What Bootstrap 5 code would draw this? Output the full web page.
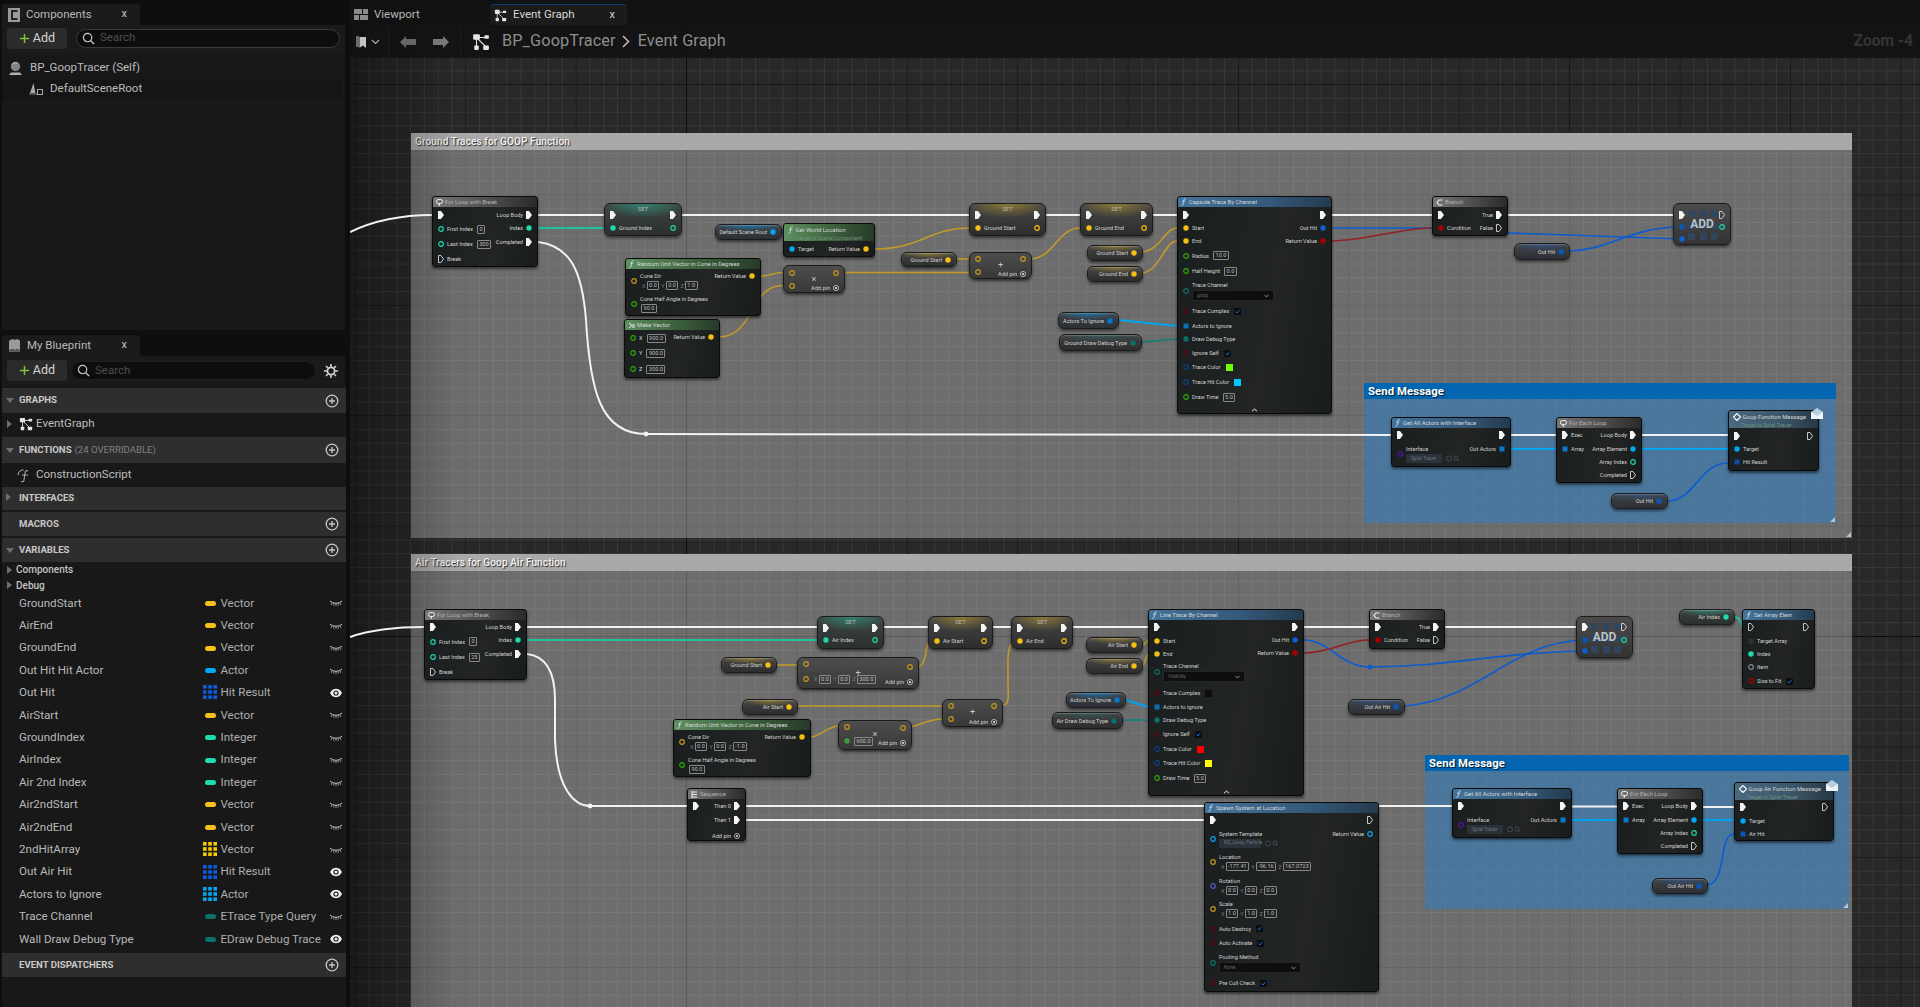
<!doctype html>
<html lang="en"><head><meta charset="utf-8"><title>BP_GoopTracer</title>
<link href="https://cdn.jsdelivr.net/npm/bootstrap@5.3.0/dist/css/bootstrap.min.css" rel="stylesheet">
<style>
html,body{height:100%;margin:0;overflow:hidden;background:#0e0e0e;font-family:Roboto,"Liberation Sans",sans-serif;color:#c0c0c0}
.ue-app{width:1920px;height:1007px}
.ue-side{width:350px;flex:none}
.ue-panel-a{height:330px}
.ue-panel-b{height:672px;margin-top:5px}
.ue-tabrow{height:25px;padding:4px 0 0 2px}
.ue-panel-b .ue-tabrow{height:21px;padding-top:0}
.ue-tab{width:138px;height:21px;background:#1b1b1b;border-radius:4px 4px 0 0;padding:0 6px 0 6px;font-size:11.5px;color:#b8b8b8;display:flex;align-items:center;gap:6px}
.ue-tab .ue-x{margin-left:auto;margin-right:7px;font-size:11px;color:#c8c8c8}
.ue-toolbar{height:28px;margin-left:2px;margin-right:5px;background:#1a1a1a;display:flex;align-items:center;padding:0 5px 2px;gap:9px}
.ue-panel-b .ue-toolbar{height:29px;gap:4px;padding-bottom:0}
.ue-add{width:60px;height:21px;background:#2b2b2b;border-radius:3px;font-size:12.5px;color:#d4d4d4;display:flex;align-items:center;justify-content:center;gap:3px;padding:0}
.ue-search{flex:1;height:19px;background:#0d0d0d;border:1px solid #3a3a3a;border-radius:10px;display:flex;align-items:center;padding:0 5px;gap:5px;font-size:11.5px;color:#4d4d4d}
.ue-panel-b .ue-search{border-color:#1f1f1f}
.ue-gear{margin:0 2px 0 4px;flex:none}
.ue-tree{height:277px;margin-left:2px;margin-right:5px;background:#181818;padding-top:5px}
.ue-treerow{height:20px;display:flex;align-items:center;font-size:11.5px;color:#bdbdbd;gap:3px;padding-left:6px}
.ue-treerow.ue-sub{background:#151515;padding-left:27px;margin-top:1px;margin-right:3px}
.ue-list{margin-left:2px;margin-right:4px;height:622px;background:#181818;padding-top:3px}
.ue-sec{background:#2e2e2e;display:flex;align-items:center;font-size:9.6px;font-weight:700;color:#c8c8c8;padding-left:4px}
.ue-s25{height:25px}
.ue-s26{height:26px}
.ue-s23{height:23px;margin-bottom:2px}
.ue-s24{height:24px;margin-bottom:2px}
.ue-s24b{height:24px}
.ue-sec .ue-caret{width:9px;flex:none}
.ue-sec .ue-dim{font-weight:400;color:#808080;margin-left:3px}
.ue-sec svg.ue-plus{margin-left:auto;margin-right:7px}
.ue-itemrow{height:20px;margin:1px 0 3px;display:flex;align-items:center;font-size:11.5px;color:#bdbdbd;padding-left:5px;gap:3px}
.ue-itemrow2{height:24px;margin:0;padding-left:15px;gap:4px}
.ue-folder{height:15.6px;display:flex;align-items:center;font-size:10px;font-weight:500;color:#c4c4c4;padding-left:5px;gap:4px}
.ue-vars{margin-top:-1px;margin-bottom:2.5px}
.ue-var{height:22.4px;display:flex;align-items:center;font-size:11.6px;color:#b8b8b8;padding-left:17px}
.ue-var .ue-vn{width:185px}
.ue-var .ue-vi{width:19px;display:flex;justify-content:center;flex:none}
.ue-var .ue-vt{width:110px;color:#adadad}
.ue-var .ue-ve{margin-left:auto;margin-right:3px;width:14px;display:flex}
.ue-pill{width:11px;height:5px;border-radius:3px;display:block}
.ue-tri{width:0;height:0;display:inline-block;border-style:solid;flex:none}
.ue-tri-r{border-width:4px 0 4px 5px;border-color:transparent transparent transparent #6e6e6e}
.ue-tri-d{border-width:5px 4px 0 4px;border-color:#6e6e6e transparent transparent transparent}
.ue-main{flex:1;position:relative;min-width:0}
.ue-mtabs{height:25px;background:#111;display:flex;align-items:flex-end;font-size:11.5px}
.ue-mtab{height:21px;display:flex;align-items:center;gap:6px;padding:0 4px}
.ue-mtab1{width:140px;color:#b5b5b5}
.ue-mtab2{width:137px;background:#1b1b1b;border-top:1px solid #0c3f70;border-radius:4px 4px 0 0;color:#d8d8d8;padding-left:4px}
.ue-mtab2 .ue-x{margin-left:auto;margin-right:8px;font-size:11px}
.ue-graph{position:relative;height:982px;overflow:hidden;background-color:#282828;
 background-image:linear-gradient(#0d0d0d,#0d0d0d),linear-gradient(#0d0d0d,#0d0d0d),
 linear-gradient(90deg,#161616 1px,transparent 1px),linear-gradient(#161616 1px,transparent 1px),
 linear-gradient(90deg,#383838 1px,transparent 1px),linear-gradient(#383838 1px,transparent 1px);
 background-size:1px 100%,100% 1px,110.4px 110.4px,110.4px 110.4px,13.8px 13.8px,13.8px 13.8px;
 background-position:336px 0,0 611px,336px 611px,336px 611px,336px 611px,336px 611px;
 background-repeat:no-repeat,no-repeat,repeat,repeat,repeat,repeat}
.ue-bar{position:absolute;left:0;top:0;right:0;height:33px;background:rgba(16,16,16,.86);display:flex;align-items:center;z-index:6;padding-left:6px}
.ue-sep{width:1px;height:33px;background:#1e1e1e}
.ue-back{margin-left:11px}
.ue-fwd{margin-left:17px}
.ue-sep2{margin-left:11px}
.ue-gicon{margin-left:11px}
.ue-crumb{font-size:16.3px;color:#8e8e8e;letter-spacing:.1px}
.ue-crumb1{margin-left:12px}
.ue-chevm{margin:0 8px 0 6px}
.ue-zoomtxt{margin-left:auto;margin-right:7px;font-size:15.6px;font-weight:700;color:#353535}
.ue-shade{position:absolute;left:0;top:0;bottom:0;width:110px;background:linear-gradient(90deg,rgba(0,0,0,.38),transparent);z-index:2;pointer-events:none}
.ue-cm{position:absolute;background:rgba(255,255,255,.32);z-index:1}
.ue-cm-h{height:17px;background:#a9a9a9;font-size:10.05px;font-weight:500;color:#f2f2f2;text-shadow:1px 1px 1px rgba(0,0,0,.75);padding-left:4px;line-height:18px;letter-spacing:.1px}
.ue-cm-s{background:rgba(54,124,185,.62);z-index:1}
.ue-cm-s .ue-cm-h{height:16px;background:#0465b0;font-size:11.3px;font-weight:700;color:#fff;line-height:18px}
.ue-grip{position:absolute;right:1px;bottom:1px;width:0;height:0;border-style:solid;border-width:0 0 5px 5px;border-color:transparent transparent #b9c4cc transparent}
.ue-wires{position:absolute;left:0;top:0;z-index:3}
.ue-n{position:absolute;z-index:4;box-sizing:border-box;border:1px solid #0a0a0a;background:linear-gradient(100deg,#1a1e1e,#232525 60%,#191c1c);border-radius:3px;box-shadow:0 2px 3px rgba(0,0,0,.55);font-size:5.6px;color:#d2d2d2;line-height:8px;white-space:nowrap}
.ue-nh{height:10px;display:flex;align-items:center;gap:2px;padding-left:3px;font-size:5.9px;color:#d8d8d8;border-radius:2px 2px 0 0;overflow:hidden}
.ue-h2{height:17px;display:block;padding:2px 0 0 4px}
.ue-h2 small{display:block;font-size:5.4px;color:#6f8f78;padding-left:8px;line-height:8px}
.ue-hgray{background:linear-gradient(90deg,#777,#555 45%,#2a2a2a);color:#b4b4b4}
.ue-hgreen{background:linear-gradient(90deg,#5f8f5f,#3e653f 50%,#273a2a)}
.ue-hblue{background:linear-gradient(90deg,#44739a,#34597a 60%,#243a4d)}
.ue-hmsg{background:linear-gradient(90deg,#4a6a80,#3a5568 60%,#263845)}
.ue-cols{display:flex;justify-content:space-between;padding:0 5px}
.ue-col{display:flex;flex-direction:column}
.ue-col-r{align-items:flex-end}
.ue-pr{display:flex;align-items:center;gap:3px}
.ue-col-r .ue-pr{flex-direction:row-reverse}
.ue-ic{width:6px;height:8px;flex:none;display:block}
.ue-st{display:flex;flex-direction:column;gap:1px;line-height:8px}
.ue-bx{display:inline-block;border:1px solid #888;height:9px;line-height:7px;padding:0 1.5px;color:#bdbdbd;font-size:5.6px;margin-left:1px;border-radius:1px}
.ue-xl{color:#777;margin-left:2px}
.ue-cb{display:inline-block;width:7px;height:7px;background:#0c0c0c;margin-left:2px;border-radius:1px;position:relative;vertical-align:middle}
.ue-sw{display:inline-block;width:7px;height:7px;margin-left:2px;vertical-align:middle}
.ue-dd{display:inline-flex;align-items:center;justify-content:space-between;height:11px;background:#0e0e0e;border:1px solid #262626;color:#666;font-size:4.8px;padding:0 4px;border-radius:1px}
.ue-dd2{background:#2b3238;border-color:#2b3238;color:#6a7680;height:9px}
.ue-sym{position:absolute;left:0;right:0;text-align:center;font-size:9px;color:#c9c9c9;line-height:9px;pointer-events:none}
.ue-chev{position:absolute;left:0;right:0;bottom:1px;text-align:center;color:#ddd;font-size:5px;line-height:5px}
.ue-env{position:absolute;right:-5px;top:-3px}
.ue-op,.ue-get,.ue-set{border-radius:6px;border-color:#1b1b1b;background:linear-gradient(#505050,#2e2e2e)}
.ue-get{display:flex;align-items:center;justify-content:flex-end;gap:3px;padding-right:5px;box-shadow:0 2px 3px rgba(0,0,0,.5),inset 0 1px 1px rgba(255,255,255,.2)}
.ue-op{background:linear-gradient(#4d4d4d,#383838)}
.ue-set{background:linear-gradient(#555,#2f2f2f)}
.ue-settl{height:10px;text-align:center;font-size:6px;line-height:10px;color:#b4b4b4}
.ue-gy{background:radial-gradient(ellipse 55% 45% at 50% 0,rgba(210,170,40,.5),transparent),linear-gradient(#464646,#2d2d2d)}
.ue-gt{background:radial-gradient(ellipse 55% 45% at 50% 0,rgba(40,200,160,.45),transparent),linear-gradient(#3d4644,#2b2f2e)}
.ue-gb{background:radial-gradient(ellipse 55% 45% at 50% 0,rgba(0,150,240,.55),transparent),linear-gradient(#414448,#2c3034)}
.ue-gB{background:radial-gradient(ellipse 55% 50% at 50% 0,rgba(30,100,200,.4),transparent),linear-gradient(#414448,#2c3034)}
.ue-gd{background:radial-gradient(ellipse 55% 45% at 50% 0,rgba(20,130,125,.35),transparent),linear-gradient(#424242,#2d2d2d)}
.ue-addn{background:linear-gradient(#4b4b4b,#343434);border-radius:6px;border-color:#1c1c1c}
.ue-addg{position:absolute;left:14px;top:6px;display:grid;grid-template-columns:repeat(3,7px);grid-auto-rows:7px;gap:4.5px}
.ue-addg i{background:#30465f;display:block}
.ue-addt{position:absolute;left:0;right:0;top:12px;text-align:center;font-size:12px;font-weight:700;color:#b9c2c9;line-height:16px}
</style></head>
<body>
<svg width="0" height="0" class="position-absolute">
<defs>
<symbol id="i-graph" viewBox="0 0 16 16"><path d="M4 4 12 4M4 4 12 12M4 4V12" stroke="#ddd" stroke-width="1"/><rect x="1" y="1" width="6" height="5" rx="1" fill="#e6e6e6"/><rect x="11" y="2" width="4" height="3" rx=".6" fill="#e6e6e6"/><rect x="2" y="11" width="4" height="4" rx=".8" fill="#e6e6e6"/><rect x="10" y="11" width="5" height="4" rx=".8" fill="#e6e6e6"/></symbol>
<symbol id="i-plus" viewBox="0 0 14 14"><circle cx="7" cy="7" r="5.8" fill="none" stroke="#c8c8c8" stroke-width="1.3"/><path d="M7 4V10M4 7H10" stroke="#c8c8c8" stroke-width="1.3"/></symbol>
<symbol id="i-eye" viewBox="0 0 14 10"><path d="M1 5C3 1.5 5 .8 7 .8S11 1.5 13 5C11 8.5 9 9.2 7 9.2S3 8.5 1 5Z" fill="#eee"/><circle cx="7" cy="5" r="2.6" fill="#181818"/><circle cx="7" cy="5" r="1.5" fill="#eee"/></symbol>
<symbol id="i-shut" viewBox="0 0 14 10"><path d="M1 3C4 6 10 6 13 3" fill="none" stroke="#cfcfcf" stroke-width="1"/><path d="M3 5 2 7M7 6V8M11 5 12 7M5 5.6 4.6 7.5M9 5.6 9.4 7.5" stroke="#cfcfcf" stroke-width=".7"/></symbol>
<symbol id="i-srch" viewBox="0 0 14 14"><circle cx="6" cy="6" r="4.5" fill="none" stroke="#c9c9c9" stroke-width="1.3"/><path d="M9.4 9.4 13 13" stroke="#c9c9c9" stroke-width="1.4"/></symbol>
<symbol id="i-addplus" viewBox="0 0 12 12"><path d="M6 1V11M1 6H11" stroke="#7fc23e" stroke-width="1.6"/></symbol>
</defs></svg>
<div class="ue-app d-flex">
 <aside class="ue-side">
  <section class="ue-panel-a">
   <div class="ue-tabrow"><div class="ue-tab"><svg width="12" height="14" viewBox="0 0 12 14"><path d="M0 0H12V14H0Z" fill="#9a9a9a"/><path d="M9.500 3H4V11H9.500" fill="none" stroke="#222" stroke-width="2"/></svg><span>Components</span><span class="ue-x">x</span></div></div>
   <div class="ue-toolbar"><div class="ue-add"><svg width="11" height="11"><use href="#i-addplus"/></svg>Add</div><div class="ue-search"><svg width="13" height="13"><use href="#i-srch"/></svg>Search</div></div>
   <div class="ue-tree">
    <div class="ue-treerow"><svg width="15" height="15" viewBox="0 0 15 15"><circle cx="7.500" cy="5.500" r="4.700" fill="#858585"/><path d="M4 3.500C5 2 7 1.500 9 2" fill="none" stroke="#c4c4c4"/><path d="M3 11.500H12L14 14H1Z" fill="#b0b0b0"/></svg><span class="ms-1">BP_GoopTracer (Self)</span></div>
    <div class="ue-treerow ue-sub"><svg width="14" height="12" viewBox="0 0 14 12"><path d="M1 10 4.500 0 6.500 10Z" fill="#a8a8a8"/><path d="M0 11H8" stroke="#8a8a8a"/><rect x="8.500" y="6.500" width="5" height="5" fill="none" stroke="#aaa"/></svg><span class="ms-1">DefaultSceneRoot</span></div>
   </div>
  </section>
  <section class="ue-panel-b">
   <div class="ue-tabrow"><div class="ue-tab"><svg width="13" height="13" viewBox="0 0 13 13"><path d="M1 2C3 0 6 0 7 1 8 0 11 0 12 2V11C10 10 8 10 7 11 6 10 3 10 1 11Z" fill="#9a9a9a"/><path d="M1 11V13H12V11" fill="#5e5e5e"/></svg><span>My Blueprint</span><span class="ue-x">x</span></div></div>
   <div class="ue-toolbar"><div class="ue-add"><svg width="11" height="11"><use href="#i-addplus"/></svg>Add</div><div class="ue-search"><svg width="13" height="13"><use href="#i-srch"/></svg>Search</div><svg class="ue-gear" width="14" height="14" viewBox="0 0 14 14"><circle cx="7" cy="7" r="3.6" fill="none" stroke="#cfcfcf" stroke-width="1.8"/><path d="M7 0V3M7 11V14M0 7H3M11 7H14M2 2 4 4M10 10 12 12M12 2 10 4M4 10 2 12" stroke="#cfcfcf" stroke-width="1.6"/></svg></div>
   <div class="ue-list" id="ue-list"></div>
  </section>
 </aside>
 <main class="ue-main">
  <div class="ue-mtabs">
   <div class="ue-mtab ue-mtab1"><svg width="14" height="11" viewBox="0 0 14 11"><rect width="8" height="5" fill="#8a8a8a"/><rect x="9" width="5" height="5" fill="#8a8a8a"/><rect y="6" width="5" height="5" fill="#8a8a8a"/><rect x="6" y="6" width="8" height="5" fill="#8a8a8a"/></svg><span>Viewport</span></div>
   <div class="ue-mtab ue-mtab2"><svg width="13" height="13"><use href="#i-graph"/></svg><span>Event Graph</span><span class="ue-x">x</span></div>
  </div>
  <div class="ue-graph" id="ue-graph">
   <div class="ue-bar">
    <svg width="11" height="13" viewBox="0 0 11 13"><path d="M0 1H3V12H0Z" fill="#6c6c6c"/><path d="M3.500 2H10V13L6.700 10.500 3.500 13Z" fill="#c4c4c4"/></svg>
    <svg class="ms-1" width="9" height="6" viewBox="0 0 9 6"><path d="M1 1 4.500 4.500 8 1" fill="none" stroke="#aaa" stroke-width="1.200"/></svg>
    <span class="ue-sep ms-2"></span>
    <svg class="ue-back" width="16" height="12" viewBox="0 0 16 12"><path d="M0 6 6 0V3H16V9H6V12Z" fill="#666"/></svg>
    <svg class="ue-fwd" width="16" height="12" viewBox="0 0 16 12"><path d="M16 6 10 0V3H0V9H10V12Z" fill="#777"/></svg>
    <span class="ue-sep ue-sep2"></span>
    <svg class="ue-gicon" width="18" height="18"><use href="#i-graph"/></svg>
    <span class="ue-crumb ue-crumb1">BP_GoopTracer</span>
    <svg class="ue-chevm" width="8" height="13" viewBox="0 0 8 13"><path d="M1 1 6.500 6.500 1 12" fill="none" stroke="#bbb" stroke-width="1.600"/></svg>
    <span class="ue-crumb">Event Graph</span>
    <span class="ue-zoomtxt">Zoom -4</span>
   </div>
   <div class="ue-shade"></div>
  </div>
 </main>
</div>
<script>
/* sidebar */
const tri=(d)=>`<span class="ue-caret"><span class="ue-tri ue-tri-${d}"></span></span>`;
const plus='<svg class="ue-plus" width="14" height="14"><use href="#i-plus"/></svg>';
const sec=(d,t,dim,pl,sz)=>`<div class="ue-sec ue-s${sz}">${d?tri(d):'<span class="ue-caret"></span>'}<span class="ms-1">${t}</span>${dim?`<span class="ue-dim">${dim}</span>`:''}${pl?plus:''}</div>`;
const pillC={v:'#f7c117',a:'#00a8f5',i:'#1fdcae',e:'#0b7068'};
const gridI=c=>`<svg width="15" height="15" viewBox="0 0 15 15" fill="${c}">${[0,5.2,10.4].map(y=>[0,5.2,10.4].map(x=>`<rect x="${x}" y="${y}" width="3.6" height="3.6"/>`).join('')).join('')}</svg>`;
const vars=[['GroundStart','v','Vector',0],['AirEnd','v','Vector',0],['GroundEnd','v','Vector',0],['Out Hit Hit Actor','a','Actor',0],['Out Hit','#0a5be0','Hit Result',1],['AirStart','v','Vector',0],['GroundIndex','i','Integer',0],['AirIndex','i','Integer',0],['Air 2nd Index','i','Integer',0],['Air2ndStart','v','Vector',0],['Air2ndEnd','v','Vector',0],['2ndHitArray','#f7c800','Vector',0],['Out Air Hit','#0a5be0','Hit Result',1],['Actors to Ignore','#00a8f5','Actor',1],['Trace Channel','e','ETrace Type Query',0],['Wall Draw Debug Type','e','EDraw Debug Trace',1]];
let h='';
h+=sec('d','GRAPHS','',1,'25');
h+=`<div class="ue-itemrow"><span class="ue-tri ue-tri-r"></span><svg class="ms-1" width="14" height="14"><use href="#i-graph"/></svg><span>EventGraph</span></div>`;
h+=sec('d','FUNCTIONS','(24 OVERRIDABLE)',1,'26');
h+=`<div class="ue-itemrow ue-itemrow2"><svg width="15" height="15" viewBox="0 0 15 15"><path d="M11 3C9 2 8 3 8 5L7 12C7 13.500 6 14 4 13.500M5 7H11" fill="none" stroke="#aaa" stroke-width="1.100"/><path d="M1 7C1.500 3.500 3.500 2 6.500 2" fill="none" stroke="#bbb"/></svg><span>ConstructionScript</span></div>`;
h+=sec('r','INTERFACES','',0,'23');
h+=sec('','MACROS','',1,'24');
h+=sec('d','VARIABLES','',1,'24b');
h+=`<div class="ue-folder"><span class="ue-tri ue-tri-r"></span>Components</div><div class="ue-folder"><span class="ue-tri ue-tri-r"></span>Debug</div><div class="ue-vars">`;
for(const [n,c,t,e] of vars){
 const ic=pillC[c]?`<span class="ue-pill" data-c="${c}"></span>`:gridI(c);
 h+=`<div class="ue-var"><span class="ue-vn">${n}</span><span class="ue-vi">${ic}</span><span class="ue-vt">${t}</span><span class="ue-ve"><svg width="14" height="10"><use href="#i-${e?'eye':'shut'}"/></svg></span></div>`;
}
h+='</div>'+sec('','EVENT DISPATCHERS','',1,'24');
const list=document.getElementById('ue-list');list.innerHTML=h;
list.querySelectorAll('.ue-pill').forEach(p=>p.style.background=pillC[p.dataset.c]);

/* graph */
const G=document.getElementById('ue-graph');
const OX=350,OY=25;
const c={y:'#f5bf14',t:'#1ed9ab',b:'#00a7f2',B:'#0b5fd8',r:'#a80000',R:'#5e0a0a',g:'#2fa800',T:'#0b6f6a',N:'#0c3f86',P:'#5a10a8',W:'#888',D:'#1450a0',L:'#5060c0',o:'#c89a18'};
function cm(x,y,w,ht,t,s){const d=document.createElement('div');d.className='ue-cm'+(s?' ue-cm-s':'');d.style.cssText=`left:${x-OX}px;top:${y-OY}px;width:${w}px;height:${ht}px`;d.innerHTML=`<div class="ue-cm-h">${t}</div><span class="ue-grip"></span>`;G.appendChild(d)}
cm(411,133,1441,405,'Ground Traces for GOOP Function');
cm(411,554,1441,470,'Air Tracers for Goop Air Function');
cm(1364,383,472,140,'Send Message',1);
cm(1425,755,424,154,'Send Message',1);

/* wires */
const W={w:['#f2f2f2',2],t:['#1fc29a',2],y:['#c29a27',1.6],b:['#00a3ee',2],B:['#0b5cd0',1.6],r:['#952020',1.6],T:['#0d7f78',1.5]};
const wires=[
['w','M350 232C375 220 400 215 432 215'],['w','M538 215H1673'],['w','M538 242C570 246 582 270 586 320C590 390 600 434 646 434L1391 435'],['w','M1511 435H1556M1642 435H1728'],
['t','M538 228H604'],
['y','M875 249C920 249 930 228 969 228'],['y','M761 276C770 276 772 273 783 272.500'],['y','M720 337C755 335 750 285 783 285.500'],['y','M845 272.500H969'],['y','M957 259H969'],['y','M1032 259C1055 256 1058 228 1080 228'],['y','M1143 252C1160 250 1165 228 1177 228'],['y','M1143 273C1160 270 1165 241 1177 241'],
['b','M1119 320L1177 326'],['T','M1142 342L1177 339'],['B','M782 232C785 233 785 240 784 249'],
['B','M1332 228H1432M1508 233L1681 239'],['r','M1332 241C1370 240 1400 228 1432 228'],['B','M1570 251C1610 250 1630 227 1681 227'],
['b','M1511 449H1556M1642 449H1728'],['B','M1668 501C1695 500 1700 463 1728 463'],
['w','M350 637C370 630 395 627 424 627'],['w','M527 627H1576'],['t','M527 640H817'],['w','M527 654C545 656 555 670 555 700V740C557 790 575 806 590 806H687'],['w','M746 806H1452'],['w','M746 820H1204'],['w','M1572 806.500H1617M1703 807H1734'],
['y','M777 665H797'],['y','M798 706H942'],['y','M811 737C822 736 826 727 838 726'],['y','M903 728C918 728 926 719 942 719'],['y','M919 667C930 660 922 640 934 640'],['y','M1003 705C1010 705 1008 695 1008 680C1008 660 1006 640 1018 640'],['y','M1143 645L1148 640.500'],['y','M1143 666L1148 653.500'],
['b','M1126 700L1148 707'],['T','M1123 720H1148'],
['B','M1304 640C1330 640 1340 667 1370 667C1450 667 1500 652 1583 651'],['r','M1304 653C1335 652 1345 640 1369 640'],['B','M1405 706C1480 700 1510 642 1584 640'],
['t','M1735 617C1748 618 1740 653 1750 653'],['b','M1572 820H1617M1703 820H1734'],['B','M1708 885C1728 880 1718 834 1734 834']];
const svgNS='http://www.w3.org/2000/svg';
const sv=document.createElementNS(svgNS,'svg');sv.setAttribute('class','ue-wires');sv.setAttribute('width','1570');sv.setAttribute('height','982');sv.setAttribute('viewBox','350 25 1570 982');
for(const [k,d] of wires){const p=document.createElementNS(svgNS,'path');p.setAttribute('d',d);p.setAttribute('fill','none');p.setAttribute('stroke',W[k][0]);p.setAttribute('stroke-width',W[k][1]);sv.appendChild(p)}
for(const [x,y,f] of [[646,434,'#f2f2f2'],[590,806,'#f2f2f2'],[1370,667,'#0b5cd0']]){const q=document.createElementNS(svgNS,'circle');q.setAttribute('cx',x);q.setAttribute('cy',y);q.setAttribute('r',2.4);q.setAttribute('fill',f);sv.appendChild(q)}
G.appendChild(sv);

/* pins */
function ic(k,col){
 if(k==='e')return '<svg class="ue-ic" viewBox="0 0 6 8"><path d="M0 0H3L6 4 3 8H0Z" fill="#f4f4f4"/></svg>';
 if(k==='E')return '<svg class="ue-ic" viewBox="0 0 6 8"><path d="M.5 .5H3L5.500 4 3 7.500H.5Z" fill="none" stroke="#d8d8d8" stroke-width=".9"/></svg>';
 if(k==='d')return `<svg class="ue-ic" viewBox="0 0 6 8"><circle cx="3" cy="4" r="2.7" fill="${col}"/></svg>`;
 if(k==='o')return `<svg class="ue-ic" viewBox="0 0 6 8"><circle cx="3" cy="4" r="2.300" fill="none" stroke="${col}" stroke-width="1.200"/></svg>`;
 if(k==='s')return `<svg class="ue-ic" viewBox="0 0 6 8"><rect x=".5" y="1.500" width="5" height="5" fill="${col}"/></svg>`;
 return '';
}
const bx=v=>`<span class="ue-bx">${v}</span>`;
const xyz=(a,b,d)=>`<span class="ue-xl">X</span>${bx(a)}<span class="ue-xl">Y</span>${bx(b)}<span class="ue-xl">Z</span>${bx(d)}`;
const ck='<span class="ue-cb"><svg width="7" height="7" viewBox="0 0 7 7" class="d-block"><path d="M1.500 3.500 3 5 5.500 1.800" fill="none" stroke="#0a70e8" stroke-width="1"/></svg></span>';
const un='<span class="ue-cb"></span>';
const sw=col=>`<span class="ue-sw ue-swc" data-c="${col}"></span>`;
const dd=(t,w,cl='')=>`<span class="ue-dd ${cl}" data-w="${w}"><span>${t}</span><svg width="5" height="4" viewBox="0 0 5 4"><path d="M.5 .8 2.500 3 4.500 .8" fill="none" stroke="#aaa" stroke-width=".8"/></svg></span>`;
const dd2=(t,w)=>dd(t,w,'ue-dd2')+'<svg class="ms-1" width="14" height="7" viewBox="0 0 14 7"><circle cx="3" cy="3.500" r="2.500" fill="none" stroke="#4a5a66" stroke-width=".7"/><circle cx="10" cy="3" r="2" fill="none" stroke="#4a5a66" stroke-width=".7"/><path d="M11.500 4.500 13 6" stroke="#4a5a66" stroke-width=".7"/></svg>';
function col(items,top,right){
 let prev=top,out=document.createElement('div');out.className='ue-col'+(right?' ue-col-r':'');
 for(const it of items){
  const [y,k,cc,l,x,ht]=it;const hh=ht||8;
  const r=document.createElement('div');r.className='ue-pr';r.style.marginTop=(y-hh/2-prev)+'px';r.style.height=hh+'px';
  const lab=ht?`<span class="ue-st"><span>${l}</span><span class="d-flex align-items-center">${x||''}</span></span>`:(l?`<span>${l}</span>`:'')+(x?`<span class="d-inline-flex align-items-center">${x}</span>`:'');
  r.innerHTML=ic(k,c[cc]||cc)+(lab||'');
  out.appendChild(r);prev=y+hh/2;
 }
 return out;
}
function node(o){
 const [x,y,r,b]=o.box,d=document.createElement('div');
 d.className='ue-n '+(o.cls||'');d.style.cssText=`left:${x-OX}px;top:${y-OY}px;width:${r-x}px;height:${b-y}px`;
 let hh=0;
 if(o.t){
  if(o.two){d.innerHTML=`<div class="ue-nh ue-h2 ue-h${o.k}">${o.ti||''}${o.t}<small>${o.two}</small></div>`;hh=17}
  else if(o.k==='set'){d.innerHTML=`<div class="ue-settl">SET</div>`;hh=10}
  else{d.innerHTML=`<div class="ue-nh ue-h${o.k}">${o.ti||''}<span>${o.t}</span></div>`;hh=10}
 }
 const top=y+1+hh;
 const cols=document.createElement('div');cols.className='ue-cols';
 cols.appendChild(col(o.l||[],top,false));cols.appendChild(col(o.r||[],top,true));d.appendChild(cols);
 if(o.sym){const s=document.createElement('div');s.className='ue-sym';s.style.top=(o.sym[1]-y-5.5)+'px';s.textContent=o.sym[0];d.appendChild(s)}
 if(o.chev){const s=document.createElement('div');s.className='ue-chev';s.innerHTML='<svg width="7" height="4" viewBox="0 0 7 4"><path d="M1 3.200 3.500 1 6 3.200" fill="none" stroke="#eee" stroke-width="1"/></svg>';d.appendChild(s)}
 if(o.env){const s=document.createElement('div');s.className='ue-env';s.innerHTML='<svg width="12" height="11" viewBox="0 0 12 11"><path d="M0 4 6 0 12 4V11H0Z" fill="#b8cfdf"/><path d="M0 4 6 8 12 4V11H0Z" fill="#eef4f8"/></svg>';d.appendChild(s)}
 if(o.add){const s=document.createElement('div');s.className='ue-addg';s.innerHTML='<i></i>'.repeat(9);d.insertBefore(s,d.firstChild);const t=document.createElement('div');t.className='ue-addt';t.textContent='ADD';d.appendChild(t)}
 G.appendChild(d);
}
function getter(x,y,r,b,t,k,pc,g){const d=document.createElement('div');d.className='ue-n ue-get ue-g'+g;d.style.cssText=`left:${x-OX}px;top:${y-OY}px;width:${r-x}px;height:${b-y}px`;d.innerHTML=`<span>${t}</span>`+ic(k,pc);G.appendChild(d)}
const fI='<svg width="6" height="8" viewBox="0 0 6 8"><path d="M5 1C3.500 .5 3 1 2.800 2L2 6.500C1.800 7.500 1 7.500 .3 7.200M1.300 3.200H4.300" fill="none" stroke="#cfe4f5" stroke-width=".8"/></svg>';
const lp='<svg width="7" height="7" viewBox="0 0 7 7"><rect x=".5" y=".5" width="6" height="4" rx="1.800" fill="none" stroke="#eee"/><path d="M2 6 4 4.500V7Z" fill="#eee"/></svg>';
const br='<svg width="7" height="7" viewBox="0 0 7 7"><path d="M6.500 1H3L1 3.500 3 6H6.500" fill="none" stroke="#eee" stroke-width="1.200"/></svg>';
const seq='<svg width="7" height="7" viewBox="0 0 7 7"><path d="M1 0V7M1 1H6M1 3.500H6M1 6H6" stroke="#eee"/></svg>';
const mv='<svg width="7" height="7" viewBox="0 0 7 7"><path d="M1 1 4 3.500 1 6M4 3H7M4 5H7" fill="none" stroke="#eee"/></svg>';
const msg='<svg width="8" height="8" viewBox="0 0 8 8"><path d="M4 .5 7.500 4 4 7.500 .5 4Z" fill="none" stroke="#eee" stroke-width="1.300"/></svg> ';
const circ='<svg class="ue-ic" viewBox="0 0 6 8"><circle cx="3" cy="4" r="2.600" fill="none" stroke="#ddd" stroke-width=".7"/><circle cx="3" cy="4" r="1.100" fill="#ddd"/></svg>';

/* ---- group 1 ---- */
node({box:[432,196,538,267],t:'For Loop with Break',k:'gray',ti:lp,l:[[215,'e'],[229,'o','t','First Index',bx('0')],[244,'o','t','Last Index',bx('300')],[259,'E','','Break']],r:[[215,'e','','Loop Body'],[228,'d','t','Index'],[242,'e','','Completed']]});
node({box:[604,203,682,236],t:'SET',k:'set',cls:'ue-set ue-gt',l:[[215,'e'],[228,'d','t','Ground Index']],r:[[215,'e'],[228,'o','t']]});
getter(715,224,782,240,'Default Scene Root','d',c.b,'b');
node({box:[783,223,875,257],t:'Get World Location',two:'Target is Scene Component',k:'green',ti:fI+' ',l:[[249,'d','b','Target']],r:[[249,'d','y','Return Value']]});
node({box:[625,258,761,316],t:'Random Unit Vector in Cone in Degrees',k:'green',ti:fI,l:[[281,'o','o','Cone Dir',xyz('0.0','0.0','1.0'),19],[304,'o','g','Cone Half Angle in Degrees',bx('90.0'),19]],r:[[276,'d','y','Return Value']]});
node({box:[783,265,845,293],cls:'ue-op',sym:['×',279],l:[[272.5,'o','o'],[285.5,'o','o']],r:[[272.5,'o','o'],[288,'x','','Add pin']]});
node({box:[624,319,720,378],t:'Make Vector',k:'green',ti:mv,l:[[338,'o','g','X',bx('900.0')],[353,'o','g','Y',bx('900.0')],[369,'o','g','Z',bx('300.0')]],r:[[337,'d','y','Return Value']]});
const setn=(x,r,y,b,g,l,cc,yp)=>node({box:[x,y,r,b],t:'SET',k:'set',cls:'ue-set ue-g'+g,l:[[y+12,'e'],[yp,'d',cc,l]],r:[[y+12,'e'],[yp,'o',cc]]});
setn(969,1046,203,236,'y','Ground Start','y',228);
setn(1080,1153,203,236,'y','Ground End','y',228);
getter(901,252,957,267,'Ground Start','d',c.y,'y');
node({box:[969,252,1032,279],cls:'ue-op',sym:['+',265.5],l:[[259,'o','o'],[272,'o','o']],r:[[259,'o','o'],[274,'x','','Add pin']]});
getter(1087,245,1143,261,'Ground Start','d',c.y,'y');
getter(1087,266,1143,282,'Ground End','d',c.y,'y');
getter(1058,312,1119,329,'Actors To Ignore','s','#0a78c8','b');
getter(1059,334,1142,351,'Ground Draw Debug Type','d',c.T,'d');
node({box:[1177,196,1332,414],t:'Capsule Trace By Channel',k:'blue',ti:fI,chev:1,
 l:[[215,'e'],[228,'d','y','Start'],[241,'d','y','End'],[255.5,'o','g','Radius',bx('10.0')],[271,'o','g','Half Height',bx('0.0')],[291,'o','T','Trace Channel',dd('goop',82),21],[311,'o','R','Trace Complex',ck],[326,'s','#0a6fb0','Actors to Ignore'],[339,'d','T','Draw Debug Type'],[353,'o','R','Ignore Self',ck],[367,'o','N','Trace Color',sw('#6fff00')],[382,'o','N','Trace Hit Color',sw('#00c8ff')],[397,'o','g','Draw Time',bx('5.0')]],
 r:[[215,'e'],[228,'d','B','Out Hit'],[241,'d','r','Return Value']]});
node({box:[1432,196,1508,236],t:'Branch',k:'gray',ti:br,l:[[215,'e'],[228,'d','r','Condition']],r:[[215,'e','','True'],[228,'E','','False']]});
node({box:[1673,203,1731,245],cls:'ue-addn',add:1,l:[[215,'e'],[227,'s','#0c55b8'],[239,'d','B']],r:[[215,'E'],[227,'o','t']]});
getter(1514,243,1570,260,'Out Hit','s','#0c55b8','B');
/* send 1 */
const getAll=(x,y,b)=>node({box:[x,y,x+120,b],t:'Get All Actors with Interface',k:'blue',ti:fI,l:[[y+18,'e'],[y+37,'o','P','Interface',dd2('Splat Tracer',36),17]],r:[[y+18,'e'],[y+32,'s','#0a78c8','Out Actors']]});
getAll(1391,417,467);
const forEach=(x,y)=>node({box:[x,y,x+86,y+66],t:'For Each Loop',k:'gray',ti:lp,l:[[y+18,'e','','Exec'],[y+32,'s','#0a78c8','Array']],r:[[y+18,'e','','Loop Body'],[y+32,'d','b','Array Element'],[y+45,'o','t','Array Index'],[y+58,'E','','Completed']]});
forEach(1556,417);
node({box:[1728,410,1819,471],t:'Goop Function Message',two:'Target is Splat Tracer',k:'msg',ti:msg,env:1,l:[[435.5,'e'],[449,'d','b','Target'],[462,'s','#0c4a9c','Hit Result']],r:[[435.5,'E']]});
getter(1611,493,1668,509,'Out Hit','s','#0c55b8','B');

/* ---- group 2 ---- */
node({box:[424,609,527,680],t:'For Loop with Break',k:'gray',ti:lp,l:[[627,'e'],[641.5,'o','t','First Index',bx('0')],[657,'o','t','Last Index',bx('25')],[671.5,'E','','Break']],r:[[627,'e','','Loop Body'],[640,'d','t','Index'],[654,'e','','Completed']]});
setn(817,884,616,649,'t','Air Index','t',640);
getter(721,657,777,673,'Ground Start','d',c.y,'y');
node({box:[797,657,919,689],cls:'ue-op',sym:['+',673],l:[[664,'o','o'],[679,'o','o','',xyz('0.0','0.0','300.0')]],r:[[667,'o','o'],[682,'x','','Add pin']]});
getter(742,699,798,715,'Air Start','d',c.y,'y');
node({box:[673,719,811,777],t:'Random Unit Vector in Cone in Degrees',k:'green',ti:fI,l:[[742,'o','o','Cone Dir',xyz('0.0','0.0','-1.0'),19],[765,'o','g','Cone Half Angle in Degrees',bx('90.0'),19]],r:[[737,'d','y','Return Value']]});
node({box:[838,720,912,750],cls:'ue-op',sym:['×',734],l:[[726.5,'o','o'],[741,'d','#3f9a3a','',bx('600.0')]],r:[[728,'o','o'],[743,'x','','Add pin']]});
node({box:[687,788,746,841],t:'Sequence',k:'gray',ti:seq,l:[[806,'e']],r:[[806,'e','','Then 0'],[820,'e','','Then 1'],[836,'x','','Add pin']]});
setn(928,993,616,649,'y','Air Start','y',640.5);
setn(1011,1073,616,649,'y','Air End','y',640.5);
node({box:[942,699,1003,727],cls:'ue-op',sym:['+',712],l:[[706,'o','o'],[719,'o','o']],r:[[706,'o','o'],[721.5,'x','','Add pin']]});
getter(1086,637,1143,653,'Air Start','d',c.y,'y');
getter(1086,658,1143,674,'Air End','d',c.y,'y');
getter(1066,692,1126,708,'Actors To Ignore','s','#0a78c8','b');
getter(1052,712,1123,729,'Air Draw Debug Type','d',c.T,'d');
node({box:[1148,609,1304,796],t:'Line Trace By Channel',k:'blue',ti:fI,chev:1,
 l:[[627,'e'],[640.5,'d','y','Start'],[653.5,'d','y','End'],[672,'o','T','Trace Channel',dd('Visibility',82),21],[693,'o','R','Trace Complex',un],[707,'s','#0a6fb0','Actors to Ignore'],[720,'d','T','Draw Debug Type'],[734,'o','R','Ignore Self',ck],[749,'o','N','Trace Color',sw('#ff0000')],[763,'o','N','Trace Hit Color',sw('#ffff00')],[778,'o','g','Draw Time',bx('5.0')]],
 r:[[627,'e'],[640,'d','B','Out Hit'],[653,'d','r','Return Value']]});
node({box:[1204,802,1379,992],t:'Spawn System at Location',k:'blue',ti:fI,
 l:[[820,'e'],[838.5,'o','b','System Template',dd2('NS_Goop_Particle',42),19],[862,'o','o','Location',xyz('-177.41','-96.16','167.0723'),19],[886,'o','L','Rotation',xyz('0.0','0.0','0.0'),19],[909,'o','o','Scale',xyz('1.0','1.0','1.0'),19],[928.5,'o','R','Auto Destroy',ck],[943,'o','R','Auto Activate',ck],[963,'o','T','Pooling Method',dd('None',82),21],[983,'o','R','Pre Cull Check',ck]],
 r:[[820,'E'],[834,'o','b','Return Value']]});
node({box:[1369,609,1445,649],t:'Branch',k:'gray',ti:br,l:[[627,'e'],[640,'d','r','Condition']],r:[[627,'e','','True'],[640,'E','','False']]});
getter(1348,699,1405,715,'Out Air Hit','s','#0c55b8','B');
node({box:[1576,616,1633,658],cls:'ue-addn',add:1,l:[[627,'e'],[640,'s','#0c55b8'],[651,'d','B']],r:[[627,'E'],[640,'o','t']]});
getter(1679,609,1735,625,'Air Index','d',c.t,'t');
node({box:[1742,609,1815,689],t:'Set Array Elem',k:'blue',ti:fI,l:[[627,'E'],[640.5,'s','#333','Target Array'],[653.5,'d','t','Index'],[667,'o','W','Item'],[681,'o','r','Size to Fit',ck]],r:[[627,'E']]});
getAll(1452,788,838);
forEach(1617,788);
node({box:[1734,782,1834,841],t:'Goop Air Function Message',two:'Target is Splat Tracer',k:'msg',ti:msg,env:1,l:[[807,'e'],[820.5,'d','b','Target'],[834,'s','#0c55b8','Air Hit']],r:[[807,'E']]});
getter(1652,878,1708,894,'Out Air Hit','s','#0c55b8','B');

/* add-pin circles and values that come from the data */
G.querySelectorAll('.ue-col-r .ue-pr').forEach(r=>{if(r.textContent==='Add pin'){r.insertAdjacentHTML('afterbegin',circ)}});
G.querySelectorAll('.ue-swc').forEach(s=>s.style.background=s.dataset.c);
G.querySelectorAll('.ue-dd').forEach(s=>s.style.width=s.dataset.w+'px');
</script>
<script src="https://cdn.jsdelivr.net/npm/bootstrap@5.3.0/dist/js/bootstrap.bundle.min.js"></script>
</body></html>
